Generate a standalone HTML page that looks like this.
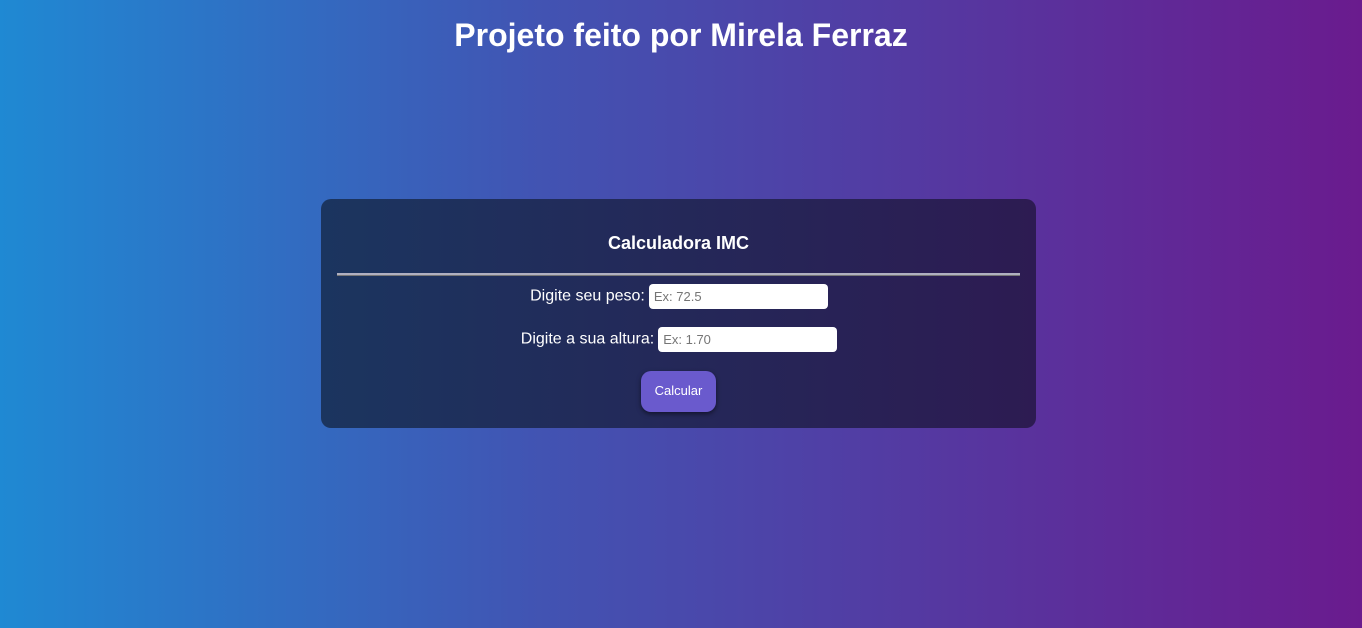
<!DOCTYPE html>
<html><head><meta charset="utf-8"><style>
html,body{margin:0;height:628px;overflow:hidden}
body{background:linear-gradient(to right,#1f89d3,#4253b2 40%,#6a1b8e);font-family:"Liberation Sans",Arial,sans-serif;color:#fff;position:relative;width:1362px}
h1{position:absolute;top:17px;left:0;width:1362px;margin:0;text-align:center;font-size:32px;font-weight:bold;line-height:37px}
.card{position:absolute;left:321px;top:199px;width:715px;height:229px;border-radius:10px;background:linear-gradient(to right,#1b355f,#2d1b52);}
.card h2{position:absolute;top:33px;left:0;width:100%;margin:0;text-align:center;font-size:18px;line-height:22px}
.hr{position:absolute;left:16px;top:74px;width:683px;height:2px;background:#b0b0c0;border-bottom:1px solid #777}
.row{position:absolute;left:0;width:100%;text-align:center;font-size:16px}
.row span{vertical-align:middle}
.inp{display:inline-block;vertical-align:middle;width:179px;height:25px;background:#fff;border-radius:4px;box-sizing:border-box;color:#757575;font-size:13px;line-height:25px;padding-left:5px;text-align:left;margin-left:4px}
.btn{position:absolute;left:320px;top:172px;width:75px;height:41px;border-radius:10px;background:#6a5acd;font-size:13px;line-height:39px;text-align:center;box-shadow:0 2px 5px rgba(0,0,0,.5)}
</style></head><body>
<h1>Projeto feito por Mirela Ferraz</h1>
<div class="card">
<h2>Calculadora IMC</h2>
<div class="hr"></div>
<div class="row" style="top:85px;padding-left:1px;box-sizing:border-box"><span>Digite seu peso:</span><span class="inp">Ex: 72.5</span></div>
<div class="row" style="top:128px;padding-left:1px;box-sizing:border-box"><span>Digite a sua altura:</span><span class="inp">Ex: 1.70</span></div>
<div class="btn">Calcular</div>
</div>
</body></html>
